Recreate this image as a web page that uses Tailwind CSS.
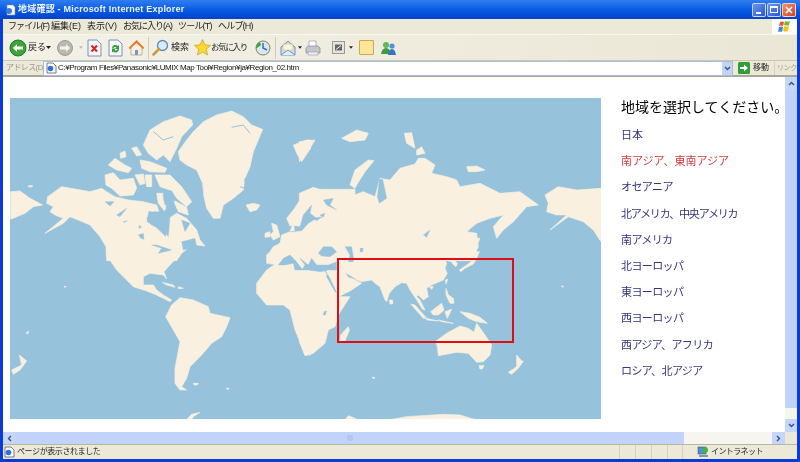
<!DOCTYPE html>
<html lang="ja">
<head>
<meta charset="UTF-8">
<title>地域確認 - Microsoft Internet Explorer</title>
<script src="https://cdn.jsdelivr.net/npm/@tailwindcss/browser@4"></script>
</head>
<body class="w-[800px] h-[462px] overflow-hidden font-['Liberation_Sans','Noto_Sans_CJK_JP',sans-serif] text-black">
<div class="w-[800px] h-[462px] flex flex-col bg-[#0a3ad8] blur-[0.3px]">

    <!-- Title bar -->
    <div class="h-[19px] shrink-0 flex items-center pl-[5px] pr-[4px] bg-gradient-to-b from-[#2f7df0] via-[#0a5ce4] to-[#0042cc]">
        <svg class="w-[11px] h-[12px] mr-[2px]" viewBox="0 0 11 12"><path d="M2 1h6l2 2v8H2z" fill="#fff" stroke="#889" stroke-width=".6"/><circle cx="4" cy="7" r="3" fill="#3a7be0"/></svg>
        <span class="text-[9px] font-bold tracking-[.22px] text-[#eef3ff] whitespace-nowrap">地域確認 - Microsoft Internet Explorer</span>
        <div class="ml-auto flex gap-[1px]">
            <div class="w-[14px] h-[14px] rounded-[2px] border border-white/70 bg-gradient-to-br from-[#6d95ee] to-[#2a55d0] flex items-end pl-[3px] pb-[2px]"><div class="w-[5px] h-[2px] bg-white"></div></div>
            <div class="w-[14px] h-[14px] rounded-[2px] border border-white/70 bg-gradient-to-br from-[#6d95ee] to-[#2a55d0] flex items-center justify-center"><div class="w-[8px] h-[7px] border border-white border-t-2"></div></div>
            <div class="w-[14px] h-[14px] rounded-[2px] border border-white/70 bg-gradient-to-br from-[#ee9070] to-[#d0401c] flex items-center justify-center">
                <svg class="w-[8px] h-[8px]" viewBox="0 0 8 8"><path d="M1 1l6 6M7 1L1 7" stroke="#fff" stroke-width="1.6"/></svg>
            </div>
        </div>
    </div>

    <!-- Window body -->
    <div class="flex-1 min-h-0 mx-[3px] mb-[3px] flex flex-col bg-[#ece9d8]">

        <!-- Menu bar -->
        <div class="h-[16px] shrink-0 flex items-center text-[9px] text-[#222] border-b border-[#f8f6ee] whitespace-nowrap">
            <span class="ml-[5px] w-[43px] tracking-[-.9px]">ファイル(F)</span>
            <span class="w-[36px]">編集(E)</span>
            <span class="w-[36px]">表示(V)</span>
            <span class="w-[55px] tracking-[-1px]">お気に入り(A)</span>
            <span class="w-[40px] tracking-[-.8px]">ツール(T)</span>
            <span class="tracking-[-.8px]">ヘルプ(H)</span>
            <div class="ml-auto w-[25px] h-[15px] bg-white flex items-center justify-center">
                <svg class="w-[14px] h-[13px]" viewBox="0 0 14 13"><path d="M2 2q2-1 4 0l-1 4q-2-1-4 0z" fill="#e8572a"/><path d="M7 1q2 1 5 0l-1 4q-2 1-5 0z" fill="#7cb82e"/><path d="M1 7q2-1 4 0l-1 5q-2-1-4 0z" fill="#3b86e0"/><path d="M6 6q2 1 5 0l-1 5q-3 1-5 0z" fill="#f6c21c"/></svg>
            </div>
        </div>

        <!-- Toolbar -->
        <div class="h-[26px] shrink-0 flex items-center text-[9px] text-[#222] bg-gradient-to-r from-[#f3f1e6] to-[#ebe7d6] border-b border-[#c9c6b2] whitespace-nowrap">
            <svg class="ml-[6px] w-[18px] h-[18px]" viewBox="0 0 18 18"><circle cx="9" cy="9" r="8" fill="#3da33a" stroke="#1e7a24"/><path d="M4 9l4-4v2.5h6v3H8V13z" fill="#fff"/></svg>
            <span class="ml-[1px] w-[18px]">戻る</span>
            <svg class="w-[5px] h-[3px]" viewBox="0 0 5 3"><path d="M0 0h5L2.500 3z" fill="#222"/></svg>
            <svg class="ml-[6px] w-[16px] h-[16px]" viewBox="0 0 16 16"><circle cx="8" cy="8" r="7.500" fill="#b9b9b0" stroke="#999"/><path d="M13 8L9 4v2.500H3v3h6V12z" fill="#f2f2ee"/></svg>
            <svg class="ml-[6px] w-[4px] h-[3px]" viewBox="0 0 5 3"><path d="M0 0h5L2.500 3z" fill="#bbb"/></svg>
            <svg class="ml-[4px] w-[15px] h-[18px]" viewBox="0 0 15 18"><path d="M1 1h9l4 4v12H1z" fill="#f4f6fb" stroke="#7c8fb8"/><path d="M4.500 6.500l5.500 6M10 6.500l-5.500 6" stroke="#d8281c" stroke-width="2"/></svg>
            <svg class="ml-[6px] w-[15px] h-[18px]" viewBox="0 0 15 18"><path d="M1 1h9l4 4v12H1z" fill="#f4f6fb" stroke="#7c8fb8"/><path d="M4 9a3.500 3.500 0 0 1 6-2l1-1v4H7l1.500-1.500A2 2 0 0 0 5.500 9zM11 10a3.500 3.500 0 0 1-6 2.500l-1 1v-4h4l-1.500 1.500A2 2 0 0 0 9.500 10z" fill="#2f9e36"/></svg>
            <svg class="ml-[5px] w-[17px] h-[17px]" viewBox="0 0 17 17"><path d="M3 8v8h11V8L8.500 3z" fill="#f7efe0" stroke="#a89878" stroke-width=".7"/><path d="M.5 9l8-8 8 8-1.500 1-6.500-6-6.500 6z" fill="#e8782c"/><rect x="7" y="11" width="3" height="5" fill="#7a95c8"/></svg>
            <div class="ml-[3px] w-[1px] h-[22px] bg-[#cfccb8]"></div>
            <svg class="ml-[3px] w-[17px] h-[17px]" viewBox="0 0 17 17"><circle cx="10.500" cy="6.500" r="5" fill="#dbeafa" stroke="#5f88bd" stroke-width="1.300"/><path d="M7 10l-5.500 5.500" stroke="#cc9a44" stroke-width="2.600" stroke-linecap="round"/></svg>
            <span class="ml-[2px] w-[20px]">検索</span>
            <svg class="ml-[3px] w-[17px] h-[17px]" viewBox="0 0 17 17"><path d="M8.500.5l2.400 5.300 5.600.6-4.200 3.800 1.200 5.800-5-2.900-5 2.900 1.200-5.800L.5 6.400l5.600-.6z" fill="#fbd932" stroke="#c79a1c" stroke-width=".7"/></svg>
            <span class="w-[36px] text-[8.500px] tracking-[-1.300px]">お気に入り</span>
            <svg class="ml-[8px] w-[16px] h-[16px]" viewBox="0 0 16 16"><circle cx="8" cy="8" r="7" fill="#dde6ee" stroke="#6f8a6a"/><path d="M8 3v5l4 2" stroke="#3c6fb4" stroke-width="1.500" fill="none"/><path d="M1 8a7 7 0 0 1 4-6l1 3-4 3z" fill="#3fa33c"/></svg>
            <div class="ml-[4px] w-[1px] h-[22px] bg-[#cfccb8]"></div>
            <svg class="ml-[4px] w-[17px] h-[16px]" viewBox="0 0 17 16"><path d="M1 7l7-6 7 6v8H1z" fill="#cfe0f5" stroke="#6d8fbe"/><path d="M3 4h10v5l-5 3-5-3z" fill="#fff7d8" stroke="#c9a860" stroke-width=".5"/><path d="M1 15l7-5 7 5" stroke="#6d8fbe" fill="#e4eefb"/></svg>
            <svg class="ml-[1px] w-[4px] h-[3px]" viewBox="0 0 5 3"><path d="M0 0h5L2.500 3z" fill="#222"/></svg>
            <svg class="ml-[3px] w-[16px] h-[16px]" viewBox="0 0 16 16"><path d="M4 1h7v6H4z" fill="#fff" stroke="#999" stroke-width=".7"/><path d="M1 8l2-2h10l2 2v5H1z" fill="#c4c8cc" stroke="#808890" stroke-width=".7"/><path d="M3 12h10v3H3z" fill="#eef" stroke="#999" stroke-width=".6"/></svg>
            <svg class="ml-[11px] w-[13px] h-[13px]" viewBox="0 0 13 13"><rect x=".5" y=".5" width="12" height="12" fill="#e6e6e0" stroke="#9a9a90"/><rect x="3" y="3.500" width="7" height="6" fill="#666"/><path d="M4 8.500l5-4" stroke="#eee"/></svg>
            <svg class="ml-[4px] w-[4px] h-[3px]" viewBox="0 0 5 3"><path d="M0 0h5L2.500 3z" fill="#222"/></svg>
            <div class="ml-[6px] w-[15px] h-[15px] bg-[#fbe69a] border border-[#c8a850] rounded-[1px]"></div>
            <svg class="ml-[6px] w-[17px] h-[16px]" viewBox="0 0 17 16"><circle cx="6" cy="5" r="3" fill="#5cb85a"/><path d="M1 14q1-6 5-6t5 6z" fill="#3f9a40"/><circle cx="12" cy="6" r="2.600" fill="#4f8fdd"/><path d="M8 15q1-6 4-6t4 6z" fill="#3574c8"/></svg>
        </div>

        <!-- Address bar -->
        <div class="h-[16px] shrink-0 flex items-center text-[9px] border-b-2 border-[#a9a698] whitespace-nowrap">
            <span class="ml-[3px] w-[37px] shrink-0 text-[#9a9a8e] text-[8px] tracking-[-.6px]">アドレス(D)</span>
            <div class="w-[690px] h-[15px] shrink-0 bg-white border border-[#a8bfd6] flex items-center text-[#111]">
                <svg class="ml-[2px] w-[11px] h-[12px]" viewBox="0 0 11 12"><path d="M1 1h6l3 3v7H1z" fill="#fff" stroke="#778"/><circle cx="4.500" cy="6.500" r="2.800" fill="#2f6fd6"/></svg>
                <span class="ml-[1px] text-[8px] tracking-[-.4px]">C:¥Program Files¥Panasonic¥LUMIX Map Tool¥Region¥ja¥Region_02.htm</span>
                <div class="ml-auto w-[10px] h-[13px] bg-[#c2d4f6] flex items-center justify-center">
                    <svg class="w-[7px] h-[5px]" viewBox="0 0 7 5"><path d="M1 1l2.500 2.500L6 1" stroke="#3a4f80" stroke-width="1.400" fill="none"/></svg>
                </div>
            </div>
            <svg class="ml-[5px] w-[12px] h-[12px] shrink-0" viewBox="0 0 12 12"><rect width="12" height="12" rx="1.500" fill="#2f9e36"/><path d="M2 5h4V2.500L10 6 6 9.500V7H2z" fill="#fff"/></svg>
            <span class="ml-[3px] w-[21px] shrink-0 text-[8px] text-[#222]">移動</span>
            <div class="w-[1px] h-[13px] shrink-0 bg-[#d3d0bc]"></div>
            <span class="ml-[2px] text-[#a0a094] text-[7px] tracking-[-.4px]">リンク</span>
        </div>

        <!-- Page + vertical scrollbar -->
        <div class="flex-1 min-h-0 flex">
            <div class="w-[782px] bg-white flex pl-[7px] pt-[21px] overflow-hidden">

                <!-- Map -->
                <div class="relative w-[591px] h-[321px] shrink-0">
                    <svg class="block w-[591px] h-[321px]" viewBox="10 98 591 321">
                        <rect x="10" y="98" width="591" height="321" fill="#96c2dc"/>
                        <g fill="#f9f0e0" stroke="#f9f0e0" stroke-width="2" stroke-linejoin="round">
                        <g transform="translate(0 90) scale(.33333)">
                            <path d="M32 305L60 303 90 325 128 345 100 350 75 370 32 388z"/>
                            <path d="M143 320L185 290 230 298 270 305 305 295 320 305 345 320 385 330 430 335 470 345 478 368 445 362 440 395 470 415 498 442 507 385 530 370 560 385 590 420 600 450 615 468 590 465 570 470 545 490 530 512 320 512 318 470 300 440 270 405 240 392 210 380 190 400 135 430 190 385 165 375 150 365 160 350 140 340z"/>
                            <path d="M430 165L450 120 490 95 540 78 575 90 578 105 545 140 530 175 510 215 490 195 470 210 445 190z"/>
                            <path d="M325 225L345 205 375 225 395 235 385 248 350 240z"/>
                            <path d="M395 175L410 170 425 195 410 198z"/>
                            <path d="M360 190L375 183 378 200 362 205z"/>
                            <path d="M420 210L450 215 500 235 495 247 450 245 425 235z"/>
                            <path d="M315 255L340 248 360 270 400 265 410 295 400 315 360 318 335 295 318 285z"/>
                            <path d="M405 255L430 252 435 280 420 285z"/>
                            <path d="M435 255L455 255 455 290 440 290z"/>
                            <path d="M465 255L510 255 545 290 575 335 560 350 530 325 510 300 480 290z"/>
                            <path d="M470 310L495 310 500 330 495 365 475 340z"/>
                            <path d="M520 330L560 352 565 375 535 365z"/>
                            <path d="M535 185L560 150 580 125 610 95 650 75 695 63 730 80 755 105 788 118 775 150 760 185 750 230 735 265 730 300 700 325 670 345 660 385 640 385 620 355 612 320 608 280 590 240 560 225 540 210z"/>
                            <path d="M738 345L760 340 780 345 770 360 750 365z"/>
                            <path d="M880 165L920 150 932 150 932 175 905 215 890 190z"/>
                            <path d="M85 287L98 287 95 291 86 291z"/>
                        </g>
                        <g transform="translate(300 90) scale(.33333)">
                            <path d="M-2 155L45 150 30 175 15 190-2 215z"/>
                            <path d="M-2 310L40 292 80 305 105 325 90 340 75 355 100 360 125 330 150 320 190 305 225 320 240 265 270 270 300 235 345 222 355 205 375 205 405 225 395 250 440 260 470 270 480 290 540 280 600 310 660 305 715 345 680 350 640 395 610 420 590 445 580 410 610 375 570 385 530 400 500 425 530 430 535 470 515 512-2 512z"/>
                            <path d="M150 285L165 240 205 210 222 212 195 245 170 285 165 295z"/>
                            <path d="M313 130L335 128 345 175 320 160z"/>
                            <path d="M350 180L365 170 375 190 350 195z"/>
                            <path d="M125 145L170 120 205 130 195 150 150 155z"/>
                            <path d="M500 230L530 228 555 240 530 245 505 245z"/>
                            <path d="M735 315L775 290 830 300 903 295 903 455 880 420 850 395 805 380 750 420 800 375 770 375 740 365 745 340z"/>
                        </g>
                        <g transform="translate(0 255) scale(.33333)">
                            <path d="M318-2L350 45 400 95 440 108 465 118 490 130 510 140 515 135 490 120 470 105 460 90 430 90 430 65 450 55 490 60 500 72 492 50 510 30 540-2z"/>
                            <path d="M487 82L520 90 525 97 500 90z"/>
                            <path d="M535 95L550 100 535 101z"/>
                            <path d="M497 185L515 150 540 128 580 135 625 155 630 175 690 188 680 215 665 245 635 265 605 300 570 335 560 370 545 395 560 405 540 405 525 385 525 340 540 260 520 225z"/>
                            <path d="M770 85L800 45 830 25 932 25 932 300 915 300 900 260 885 225 870 165 850 150 830 150 800 150 770 115z"/>
                            <path d="M58 300L80 318 60 345 40 358 35 345 65 330z"/>
                            <path d="M560 493L575 478 600 472 580 485 575 493z"/>
                            <path d="M580 385L595 385 592 390 582 390z"/>
                            <path d="M678 400L688 400 684 404z"/>
                            <path d="M78 235L86 228 84 236z"/>
                            <path d="M192 94L198 94 196 98z"/>
                        </g>
                        <g transform="translate(300 255) scale(.33333)">
                            <path d="M-2 40L75 50 100 100 118 125 150 125 115 180 105 215 85 225 75 265 40 295 15 302-2 260z"/>
                            <path d="M80 50L105 100 115 125 150 108 185 85 165 75 140 55 160 70 185 80 215 75 215-2 75-2z"/>
                            <path d="M120 258L122 240 145 215 148 225 135 258z"/>
                            <path d="M408 258L440 235 480 213 505 220 522 232 530 205 555 240 575 270 570 300 550 320 530 322 505 295 470 292 415 302 412 275z"/>
                            <path d="M537 332L552 332 547 342 540 342z"/>
                            <path d="M650 300L665 318 670 318 655 340 635 358 625 352 650 335z"/>
                            <path d="M265 495L320 485 430 478 480 480 530 495z"/>
                            <path d="M135 495L145 482 165 490 175 495z"/>
                            <path d="M216 367L224 367 222 372z"/>
                            <path d="M784 93L790 93 788 97z"/>
                        </g>
                        <!-- Europe -->
                        <g transform="translate(245 190) scale(.33333)">
                            <path d="M125 85L145 60 175 15 200-2 330-2 330 240 100 240 100 225 65 220 65 195 75 185 85 170 105 160 110 135 135 125 142 105 135 108z"/>
                        </g>
                        <!-- South and East Asia -->
                        <g transform="translate(370 240) scale(.33333)">
                            <path d="M-5-5L330-5 318 25 300 30 280 38 262 52 250 58 262 70 258 80 248 72 245 65 225 60 230 70 225 85 232 100 220 120 185 135 170 145 175 170 160 180 145 165 140 170 150 180 165 210 158 208 140 180 130 165 120 150 110 130 95 128 75 140 58 160 50 185 45 180 30 140 15 130 0 115-5 112z"/>
                        </g>
                        </g>
                        <!-- Water over the land -->
                        <g fill="#96c2dc" stroke="#96c2dc" stroke-width="1" stroke-linejoin="round">
                            <g transform="translate(245 190) scale(.33333)">
                                <path d="M100 225L115 205 135 195 150 210 172 238 180 225 165 205 190 225 200 205 215 225 250 225 275 215 275 240 250 240 225 245 190 240 150 240 145 220 120 225z"/>
                                <path d="M220 190L235 170 260 170 275 185 255 200 230 198z"/>
                                <path d="M300 170L320 170 325 200 325 215 310 215 315 195z"/>
                                <path d="M345 175L355 175 352 186 346 186z"/>
                                <path d="M235 30L265 25 255 45 275 60 245 45z"/>
                                <path d="M165 110L175 75 200 45 195 70 215 85 190 100 170 122 135 125 150 125 148 108z"/>
                                <path d="M205 85L232 80 215 92z"/>
                                <path d="M225 75L240 70 235 82z"/>
                            </g>
                            <g transform="translate(300 255) scale(.33333)">
                                <path d="M78 62L85 62 110 112 105 110z"/>
                                <path d="M138 55L165 72 145 66z"/>
                                <path d="M72 170L80 168 76 180 70 180z"/>
                            </g>
                            <g transform="translate(300 90) scale(.33333)">
                                <path d="M238 268L248 268 260 325 238 340 232 320z"/>
                                <path d="M370 435L390 420 380 442z"/>
                            </g>
                            <!-- Canada, Greenland fjords -->
                            <g transform="translate(100 170) scale(.33333)">
                                <path d="M140 145L160 125 190 125 205 115 210 140 205 200 185 170 155 165z"/>
                                <path d="M190 65L215 62 228 85 215 105 195 105 190 85z"/>
                                <path d="M15 95L42 95 30 108z"/>
                                <path d="M50 135L80 115 60 140z"/>
                                <path d="M115 195L130 190 132 208 122 205z"/>
                                <path d="M155 225L185 235 175 250 195 245 215 240 170 225z"/>
                                <path d="M245 215L285 205 290 230 250 240z"/>
                                <path d="M245 150L270 160 255 185z"/>
                                <path d="M118 165L125 172 116 175z"/>
                                <path d="M70 155L82 152 72 158z"/>
                            </g>
                            <g transform="translate(0 90) scale(.33333)" fill="none" stroke-width="3">
                                <path d="M695 112L730 105 750 130"/><path d="M720 290L735 295 735 265"/>
                                <path d="M460 125L490 150 520 140"/>
                            </g>
                        </g>
                        <!-- Islands -->
                        <g fill="#f9f0e0" stroke="#f9f0e0" stroke-width="2" stroke-linejoin="round">
                            <g transform="translate(245 190) scale(.33333)">
                                <path d="M80 100L95 105 105 140 85 150 75 135 85 125z"/>
                                <path d="M60 130L75 125 75 140 60 142z"/>
                                <path d="M148 195L158 192 156 208 148 208z"/>
                            </g>
                            <g transform="translate(370 240) scale(.33333)">
                                <path d="M268 90L290 75 310 60 315 35 328 35 322 50 310 72 285 85 272 95z"/>
                                <path d="M58 180L68 180 68 192 60 192z"/>
                                <path d="M122 192L135 195 170 235 160 235z"/>
                                <path d="M168 235L205 243 170 240z"/>
                                <path d="M182 215L215 190 222 210 205 225 190 225z"/>
                                <path d="M225 215L245 208 232 235z"/>
                                <path d="M228 145L235 165 250 175 252 190 240 190 228 165z"/>
                                <path d="M226 120L233 118 228 132z"/>
                                <path d="M178 140L190 140 185 148z"/>
                                <path d="M270 215L300 220 330 232 352 250 320 245 295 235z"/>
                                <path d="M205 240L250 250 215 245z"/>
                            </g>
                        </g>
                    </svg>
                    <!-- selected region -->
                    <div class="absolute left-[327px] top-[160px] w-[177px] h-[85px] border-2 border-[#e00d14]"></div>
                </div>

                <!-- Region list -->
                <div class="ml-[20px] -mt-[2px] whitespace-nowrap font-['Noto_Sans_CJK_JP','Liberation_Sans',sans-serif]">
                    <p class="text-[14px] leading-[20px] text-black">地域を選択してください。</p>
                    <ul class="mt-[5px] text-[11px] leading-[26.200px] text-[#34347e]">
                        <li>日本</li>
                        <li class="text-[#d23a3a]">南アジア、東南アジア</li>
                        <li class="tracking-[-.6px]">オセアニア</li>
                        <li class="tracking-[-1.200px]">北アメリカ、中央アメリカ</li>
                        <li class="tracking-[-.6px]">南アメリカ</li>
                        <li class="tracking-[-.6px]">北ヨーロッパ</li>
                        <li class="tracking-[-.6px]">東ヨーロッパ</li>
                        <li class="tracking-[-.6px]">西ヨーロッパ</li>
                        <li class="tracking-[-.6px]">西アジア、アフリカ</li>
                        <li class="tracking-[-.6px]">ロシア、北アジア</li>
                    </ul>
                </div>
            </div>

            <!-- Vertical scrollbar -->
            <div class="w-[12px] shrink-0 flex flex-col bg-[#f6f5ef]">
                <div class="h-[13px] bg-[#c5d6f8] flex items-center justify-center"><svg class="w-[7px] h-[5px]" viewBox="0 0 7 5"><path d="M1 4l2.500-2.500L6 4" stroke="#3a4f80" stroke-width="1.400" fill="none"/></svg></div>
                <div class="h-[318px] bg-[#c1d3fb]"></div>
                <div class="flex-1"></div>
                <div class="h-[13px] bg-[#c5d6f8] flex items-center justify-center"><svg class="w-[7px] h-[5px]" viewBox="0 0 7 5"><path d="M1 1l2.500 2.500L6 1" stroke="#3a4f80" stroke-width="1.400" fill="none"/></svg></div>
            </div>
        </div>

        <!-- Horizontal scrollbar -->
        <div class="h-[12px] shrink-0 flex">
            <div class="w-[782px] flex bg-[#f6f5ef]">
                <div class="w-[12px] bg-[#c5d6f8] flex items-center justify-center"><svg class="w-[5px] h-[7px]" viewBox="0 0 5 7"><path d="M4 1L1.500 3.500 4 6" stroke="#3a4f80" stroke-width="1.400" fill="none"/></svg></div>
                <div class="w-[669px] bg-[#c1d3fb] flex items-center justify-center"><div class="w-[6px] h-[6px] bg-[#b4c8ee]"></div></div>
                <div class="flex-1"></div>
                <div class="w-[13px] bg-[#c5d6f8] flex items-center justify-center"><svg class="w-[5px] h-[7px]" viewBox="0 0 5 7"><path d="M1 1l2.500 2.500L1 6" stroke="#3a4f80" stroke-width="1.400" fill="none"/></svg></div>
            </div>
        </div>

        <!-- Status bar -->
        <div class="h-[15px] shrink-0 flex items-center text-[9px] text-[#222] border-t border-[#b8b5a2] whitespace-nowrap">
            <svg class="ml-[1px] w-[11px] h-[12px]" viewBox="0 0 11 12"><path d="M1 1h6l3 3v7H1z" fill="#fff" stroke="#778"/><circle cx="4.500" cy="6.500" r="2.800" fill="#2f6fd6"/></svg>
            <span class="ml-[2px] w-[602px] text-[8px] tracking-[-.4px]">ページが表示されました</span>
            <div class="w-[16px] h-[14px] border-l border-[#d5d2bf]"></div>
            <div class="w-[16px] h-[14px] border-l border-[#d5d2bf]"></div>
            <div class="w-[16px] h-[14px] border-l border-[#d5d2bf]"></div>
            <div class="w-[15px] h-[14px] border-l border-[#d5d2bf]"></div>
            <div class="w-[15px] h-[14px] border-l border-[#d5d2bf]"></div>
            <svg class="w-[12px] h-[12px]" viewBox="0 0 12 12"><rect x="1" y="1" width="8" height="7" fill="#4f8fdd" stroke="#345"  stroke-width=".5"/><circle cx="8" cy="4" r="3" fill="#48b04a"/><rect x="2" y="9" width="9" height="2" fill="#8a94a8"/></svg>
            <span class="ml-[2px] text-[8px] tracking-[-.6px]">イントラネット</span>
        </div>
    </div>
</div>
</body>
</html>
